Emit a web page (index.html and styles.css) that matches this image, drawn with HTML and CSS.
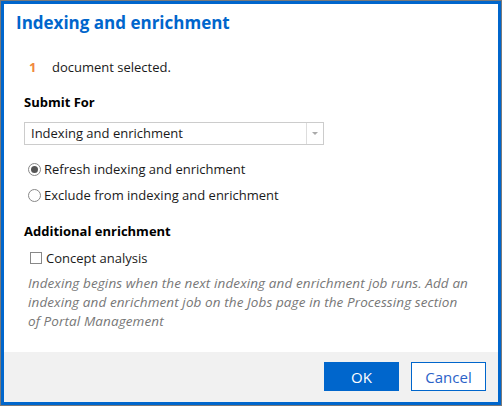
FILE: index.html
```html
<!DOCTYPE html>
<html>
<head>
<meta charset="utf-8">
<link rel="stylesheet" href="styles.css">
</head>
<body>
<div class="frame">
  <div class="dialog">
    <div class="content">
      <h1 class="title">Indexing and enrichment</h1>
      <div class="count-line"><span class="count">1</span><span>document selected.</span></div>
      <div class="label">Submit For</div>
      <div class="select">
        <span class="select-text">Indexing and enrichment</span>
        <span class="select-btn"><span class="caret"></span></span>
      </div>
      <div class="radios">
        <div class="radio-row"><span class="radio checked"></span><span>Refresh indexing and enrichment</span></div>
        <div class="radio-row"><span class="radio"></span><span>Exclude from indexing and enrichment</span></div>
      </div>
      <div class="label label-add">Additional enrichment</div>
      <div class="check-row"><span class="checkbox"></span><span>Concept analysis</span></div>
      <p class="help">Indexing begins when the next indexing and enrichment job runs. Add an indexing and enrichment job on the Jobs page in the Processing section of Portal Management</p>
    </div>
    <div class="footer">
      <button class="btn btn-primary">OK</button>
      <button class="btn btn-secondary">Cancel</button>
    </div>
  </div>
</div>
</body>
</html>
```

FILE: styles.css
```css
html, body {
  margin: 0;
  padding: 0;
  background: #ffffff;
}
body {
  font-family: "Open Sans", "Noto Sans", sans-serif;
  color: #1a1a1a;
}
.frame {
  width: 502px;
  height: 406px;
  box-sizing: border-box;
  border: 1px solid #7a7a7a;
}
.dialog {
  height: 100%;
  box-sizing: border-box;
  border: 3px solid #0066cc;
  display: flex;
  flex-direction: column;
  background: #ffffff;
}
.content {
  flex: 1;
  padding: 7px 20px 0 20px;
}
.title {
  margin: 0 0 0 -8px;
  font-size: 17px;
  line-height: 24px;
  font-weight: 700;
  color: #0066cc;
}
.count-line {
  margin-top: 23px;
  font-size: 13px;
  line-height: 18px;
  display: flex;
  padding-left: 5px;
}
.count {
  color: #f0883e;
  font-weight: 700;
  width: 23px;
  font-size: 13px;
}
.label {
  margin-top: 17px;
  font-size: 13px;
  line-height: 18px;
  font-weight: 700;
  color: #000;
}
.select {
  margin-top: 11px;
  width: 300px;
  height: 23px;
  box-sizing: border-box;
  border: 1px solid #cccccc;
  display: flex;
  align-items: stretch;
  font-size: 13px;
}
.select-text {
  flex: 1;
  padding-left: 6px;
  line-height: 21px;
}
.select-btn {
  width: 16px;
  border-left: 1px solid #dddddd;
  display: flex;
  align-items: center;
  justify-content: center;
}
.caret {
  width: 0;
  height: 0;
  border-left: 3px solid transparent;
  border-right: 3px solid transparent;
  border-top: 3px solid #aaaaaa;
}
.radios {
  margin-top: 11px;
}
.radio-row {
  height: 26px;
  display: flex;
  align-items: center;
  font-size: 13px;
  padding-left: 4px;
}
.radio {
  width: 11px;
  height: 11px;
  border: 1px solid #888888;
  border-radius: 50%;
  margin-right: 3px;
  position: relative;
  box-sizing: content-box;
}
.radio.checked::after {
  content: "";
  position: absolute;
  left: 2px;
  top: 2px;
  width: 7px;
  height: 7px;
  border-radius: 50%;
  background: #555555;
}
.label-add {
  margin-top: 14px;
}
.check-row {
  margin-top: 8px;
  height: 20px;
  display: flex;
  align-items: center;
  font-size: 13px;
  padding-left: 6px;
}
.checkbox {
  width: 10px;
  height: 10px;
  border: 1px solid #888888;
  margin-right: 4px;
}
.help {
  margin: 6px 0 0 4px;
  font-size: 13.5px;
  letter-spacing: 0.1px;
  line-height: 19px;
  font-style: italic;
  color: #777777;
  width: 442px;
}
.footer {
  height: 50px;
  background: #f1f1f1;
  display: flex;
  justify-content: flex-end;
  align-items: flex-start;
  gap: 12px;
  padding: 10px 12px 0 0;
  box-sizing: border-box;
}
.btn {
  width: 75px;
  height: 29px;
  font-family: "Open Sans", "Noto Sans", sans-serif;
  font-size: 15px;
  border: 1px solid #0066cc;
  padding: 0;
}
.btn-primary {
  background: #0066cc;
  color: #ffffff;
}
.btn-secondary {
  background: #ffffff;
  color: #2a62c8;
}
```
